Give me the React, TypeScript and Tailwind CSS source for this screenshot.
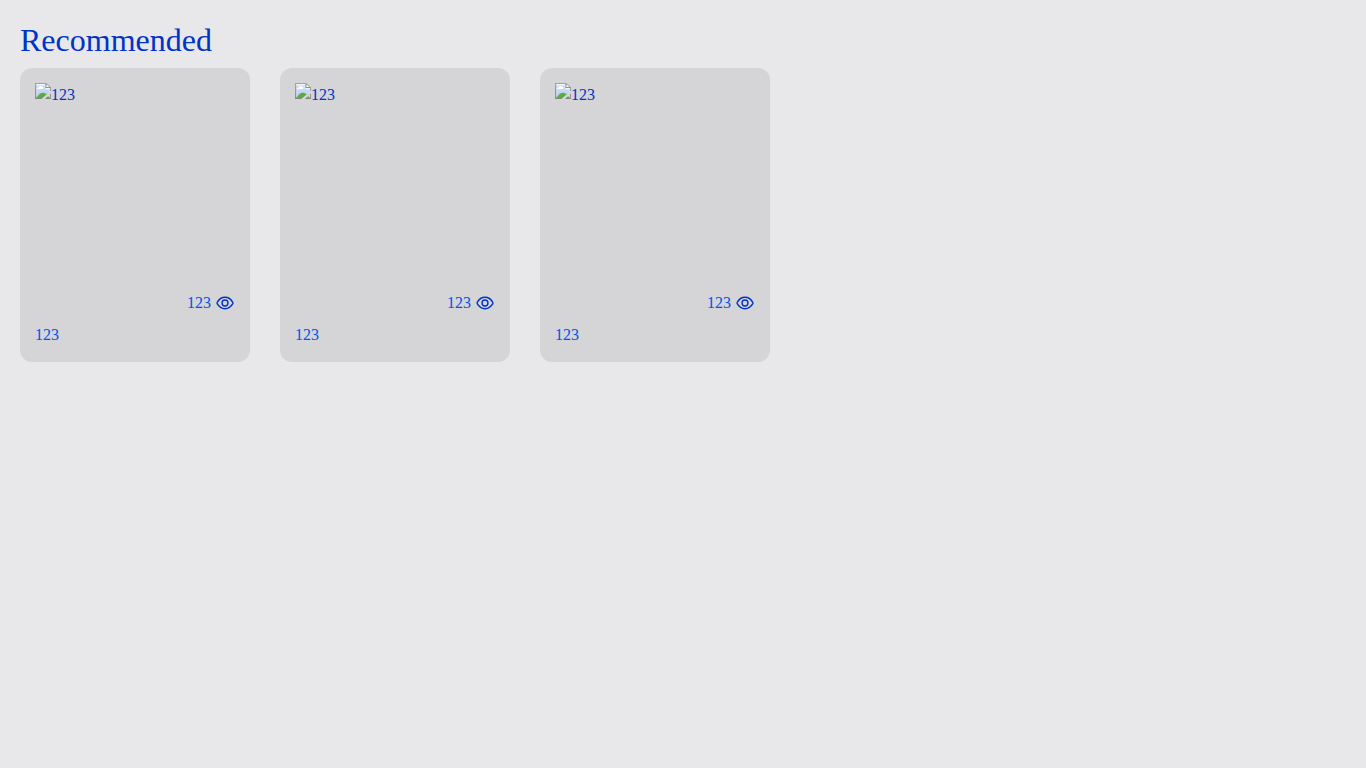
import React from "react";

const items = [
  { id: 1, alt: "123", views: "123", title: "123" },
  { id: 2, alt: "123", views: "123", title: "123" },
  { id: 3, alt: "123", views: "123", title: "123" },
];

function EyeIcon() {
  return (
    <svg viewBox="0 0 20 20" fill="none" stroke="currentColor" strokeWidth="1.4" strokeLinejoin="round" className="size-5 text-[#0033c7]">
      <path d="M2.2 10.6a1.1 1.1 0 0 1 0-1.2C3.9 6.4 6.5 4.3 10 4.3s6.1 2.1 7.8 5.1a1.1 1.1 0 0 1 0 1.2c-1.7 3-4.3 5.1-7.8 5.1s-6.1-2.1-7.8-5.1Z" />
      <circle cx="10" cy="10" r="2.95" />
    </svg>
  );
}

export default function App() {
  return (
    <main className="min-h-screen bg-[#e8e8ea] p-5 font-['Liberation_Serif',serif] text-[#0033c7]">
      <h1 className="mb-2 text-[32px] leading-[40px]">Recommended</h1>
      <div className="flex gap-[30px]">
        {items.map((item) => (
          <article key={item.id} className="flex h-[294px] w-[230px] flex-col rounded-xl bg-[#d5d5d7] p-[15px]">
            <img src="missing" alt={item.alt} className="h-[200px] w-[200px]" />
            <div className="mt-2.5 flex items-center justify-end gap-1 leading-[20px] text-[#0052ea]">
              <span>{item.views}</span>
              <EyeIcon />
            </div>
            <p className="mt-3 leading-[20px] text-[#0052ea]">{item.title}</p>
          </article>
        ))}
      </div>
    </main>
  );
}
